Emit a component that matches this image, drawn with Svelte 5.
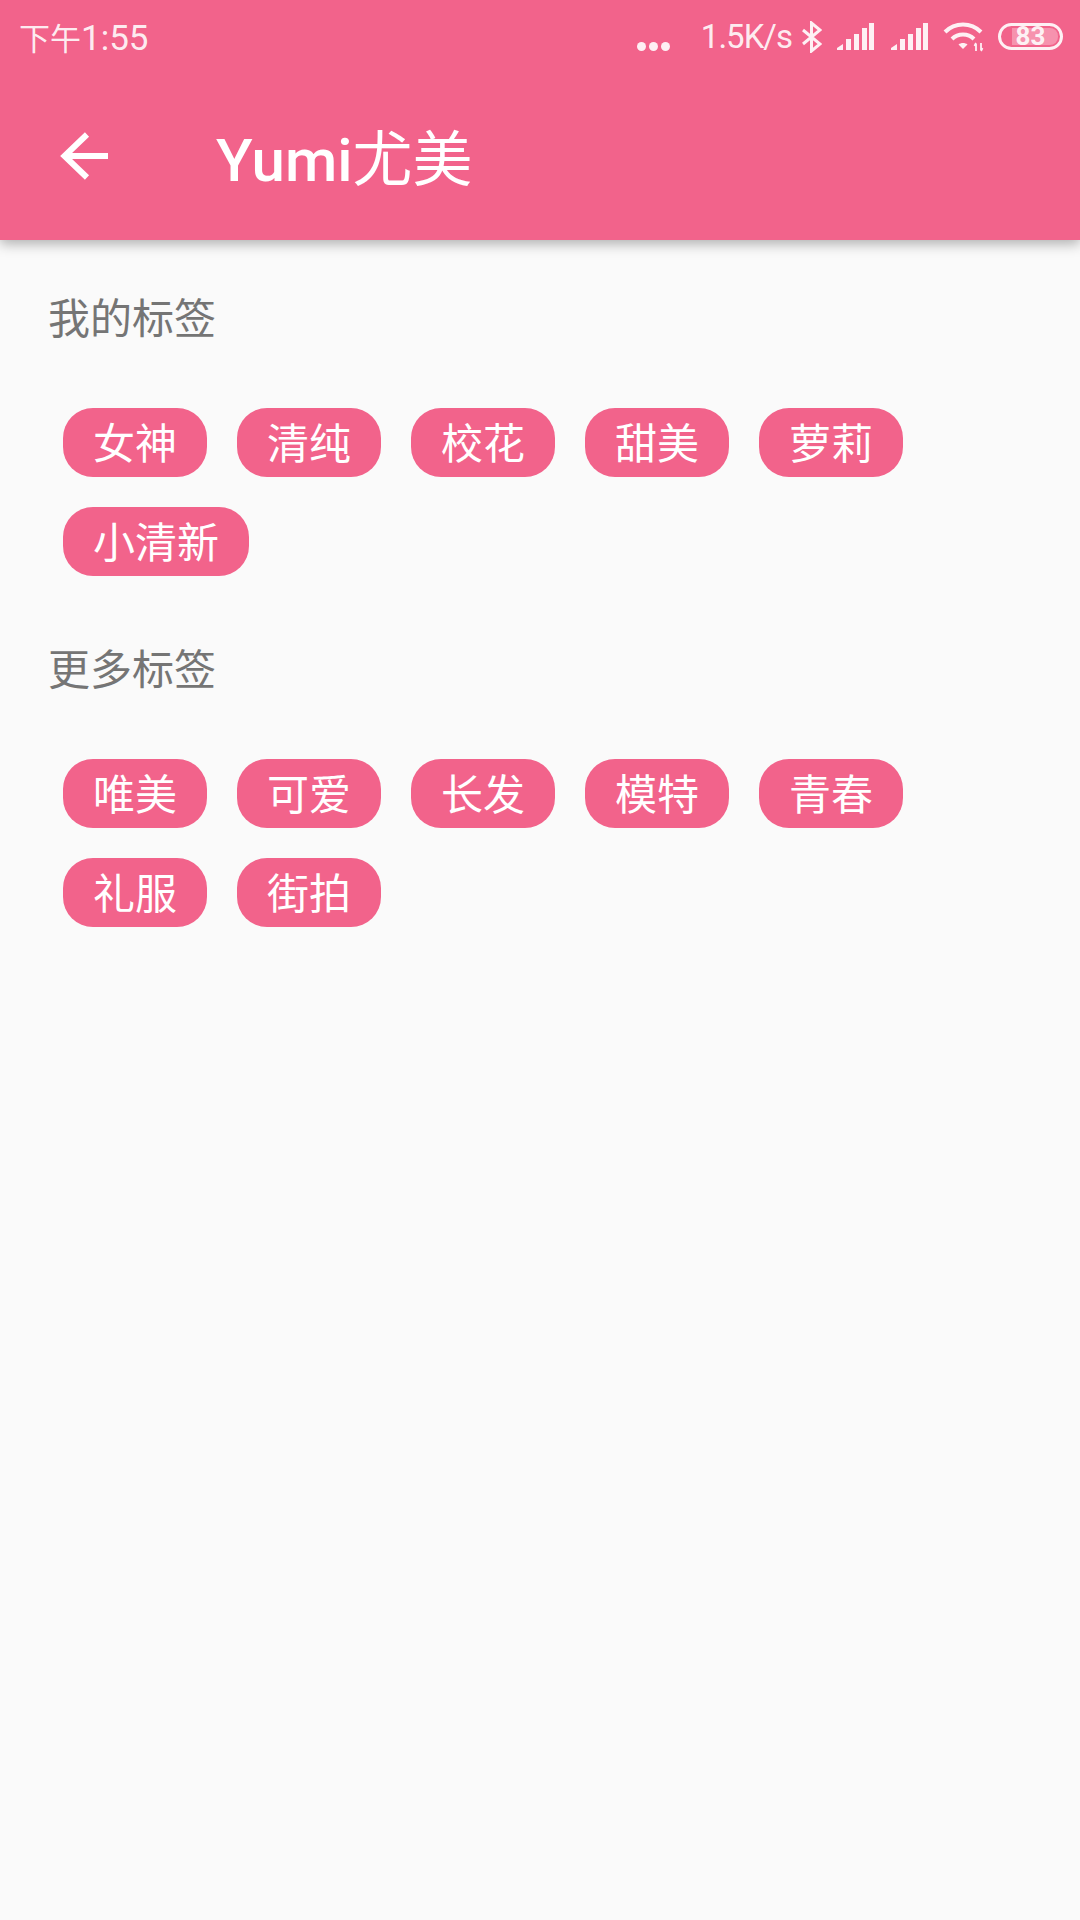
<script>
	const sections = [
		{ title: '我的标签', tags: ['女神', '清纯', '校花', '甜美', '萝莉', '小清新'] },
		{ title: '更多标签', tags: ['唯美', '可爱', '长发', '模特', '青春', '礼服', '街拍'] }
	];
	const bars = [0, 1];
</script>

<div class="page">
	<header class="appbar">
		<div class="statusbar">
			<span class="time">下午<span class="digits">1:55</span></span>
			<div class="status-right">
				<div class="dots"><i></i><i></i><i></i></div>
				<span class="speed">1.5K/s</span>
				<svg class="bt" width="20" height="32" viewBox="0 0 20 32" fill="none" stroke="currentColor" stroke-width="3">
					<path d="M1 9 L18 23 L9.500 30 V2 L18 9 L1 23" />
				</svg>
				{#each bars as b}
					<svg class="signal" width="37" height="27" viewBox="0 0 37 27" fill="currentColor">
						<path d="M0 27 V25 L6 21 V27 Z" />
						<rect x="9" y="16" width="5" height="11" />
						<rect x="17" y="11" width="5" height="16" />
						<rect x="25" y="5" width="5" height="22" />
						<rect x="32" y="0" width="5" height="27" />
					</svg>
				{/each}
				<svg class="wifi" width="42" height="30" viewBox="0 0 42 30" fill="none" stroke="currentColor" stroke-width="4">
					<path d="M2 10 C12 0 28 0 38 10" />
					<path d="M9 17 C15 11 25 11 31 17" />
					<path d="M15.500 22.500 L20 27 L24.500 22.500 C22 20.500 18 20.500 15.500 22.500 Z" fill="currentColor" stroke="none" />
					<path d="M33 29 V22 M31.500 24 L33 21 M38 21 V28 M39.500 26 L38 29" stroke-width="1.800" />
				</svg>
				<div class="battery">
					<div class="battery-fill"></div>
					<span>83</span>
				</div>
			</div>
		</div>
		<div class="toolbar">
			<svg class="back" width="48" height="48" viewBox="0 0 48 48" fill="none" stroke="currentColor" stroke-width="6">
				<path d="M48 24 H4 M27 2.500 L4.500 24 L27 45.500" />
			</svg>
			<h1>Yumi<span class="cjk">尤美</span></h1>
		</div>
	</header>

	<main>
		{#each sections as section}
			<section>
				<h2>{section.title}</h2>
				<div class="tags">
					{#each section.tags as tag}
						<span class="tag">{tag}</span>
					{/each}
				</div>
			</section>
		{/each}
	</main>
</div>

<style>
	:global(body) {
		background: #fafafa;
	}

	.page {
		min-height: 1920px;
		background: #fafafa;
		font-family: Roboto, "Noto Sans CJK SC", sans-serif;
	}

	.appbar {
		height: 240px;
		background: #f2638b;
		color: #fff;
		box-shadow: 0 4px 12px rgba(0, 0, 0, 0.3);
	}

	.statusbar {
		height: 72px;
		display: flex;
		justify-content: space-between;
		align-items: center;
		padding: 0 17px 0 19px;
		color: rgba(255, 255, 255, 0.9);
	}

	.time {
		font-size: 31px;
	}

	.digits {
		font-size: 35px;
	}

	.status-right {
		display: flex;
		align-items: center;
	}

	.dots {
		display: flex;
		gap: 3px;
		margin: 20px 31px 0 0;
	}

	.dots i {
		width: 9px;
		height: 9px;
		border-radius: 50%;
		background: currentColor;
	}

	.speed {
		font-size: 33px;
		letter-spacing: -1px;
		margin-right: 10px;
	}

	.bt {
		margin: 2px 15px 0 0;
	}

	.signal {
		margin-right: 17px;
	}

	.wifi {
		margin: 2px 13px 0 -2px;
	}

	.battery {
		position: relative;
		width: 65px;
		height: 27px;
		box-sizing: border-box;
		border: 3px solid currentColor;
		border-radius: 14px;
		display: flex;
		align-items: center;
		justify-content: center;
	}

	.battery-fill {
		position: absolute;
		left: 11px;
		top: 2px;
		bottom: 2px;
		right: 2px;
		border-radius: 0 8px 8px 0;
		background: rgba(255, 255, 255, 0.3);
	}

	.battery span {
		position: relative;
		font-size: 26px;
		font-weight: 700;
		line-height: 21px;
	}

	.toolbar {
		height: 168px;
		box-sizing: border-box;
		display: flex;
		align-items: center;
		padding-left: 60px;
	}

	.back {
		margin-right: 108px;
	}

	h1 {
		margin: -4px 0 0;
		font-size: 60px;
		font-weight: 500;
	}

	.cjk {
		font-weight: 400;
	}

	main {
		padding-top: 44px;
	}

	section {
		padding-bottom: 29px;
	}

	h2 {
		margin: 0;
		padding: 0 0 0 48px;
		height: 72px;
		line-height: 72px;
		font-size: 42px;
		font-weight: 400;
		color: #757575;
	}

	.tags {
		display: flex;
		flex-wrap: wrap;
		gap: 30px;
		padding: 30px 63px;
		margin-top: 22px;
	}

	.tag {
		height: 69px;
		line-height: 73px;
		padding: 0 30px;
		border-radius: 30px;
		background: #f2638b;
		color: #fff;
		font-size: 42px;
	}
</style>
